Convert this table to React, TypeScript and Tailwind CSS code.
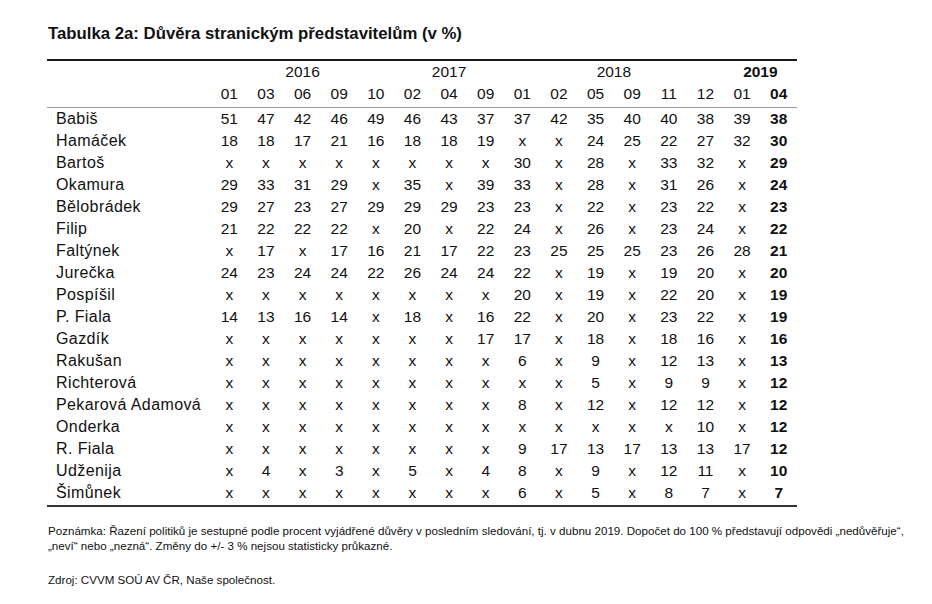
const years = [
  { label: '2016', span: 'col-span-5' },
  { label: '2017', span: 'col-span-3' },
  { label: '2018', span: 'col-span-6' },
  { label: '2019', span: 'col-span-2 font-bold' },
];

const months = ['01', '03', '06', '09', '10', '02', '04', '09', '01', '02', '05', '09', '11', '12', '01', '04'];

const rows: [string, string][] = [
  ['Babiš', '51 47 42 46 49 46 43 37 37 42 35 40 40 38 39 38'],
  ['Hamáček', '18 18 17 21 16 18 18 19 x x 24 25 22 27 32 30'],
  ['Bartoš', 'x x x x x x x x 30 x 28 x 33 32 x 29'],
  ['Okamura', '29 33 31 29 x 35 x 39 33 x 28 x 31 26 x 24'],
  ['Bělobrádek', '29 27 23 27 29 29 29 23 23 x 22 x 23 22 x 23'],
  ['Filip', '21 22 22 22 x 20 x 22 24 x 26 x 23 24 x 22'],
  ['Faltýnek', 'x 17 x 17 16 21 17 22 23 25 25 25 23 26 28 21'],
  ['Jurečka', '24 23 24 24 22 26 24 24 22 x 19 x 19 20 x 20'],
  ['Pospíšil', 'x x x x x x x x 20 x 19 x 22 20 x 19'],
  ['P. Fiala', '14 13 16 14 x 18 x 16 22 x 20 x 23 22 x 19'],
  ['Gazdík', 'x x x x x x x 17 17 x 18 x 18 16 x 16'],
  ['Rakušan', 'x x x x x x x x 6 x 9 x 12 13 x 13'],
  ['Richterová', 'x x x x x x x x x x 5 x 9 9 x 12'],
  ['Pekarová Adamová', 'x x x x x x x x 8 x 12 x 12 12 x 12'],
  ['Onderka', 'x x x x x x x x x x x x x 10 x 12'],
  ['R. Fiala', 'x x x x x x x x 9 17 13 17 13 13 17 12'],
  ['Udženija', 'x 4 x 3 x 5 x 4 8 x 9 x 12 11 x 10'],
  ['Šimůnek', 'x x x x x x x x 6 x 5 x 8 7 x 7'],
];

const grid = 'grid grid-cols-[164px_repeat(16,minmax(0,1fr))]';

export default function App() {
  return (
    <div className="w-[932px] h-[604px] bg-white text-[#111] font-['Liberation_Sans',Arial,sans-serif] px-[47px] pt-[24px]">
      <h1 className="text-[16.75px] leading-[20px] font-bold pl-px">
        Tabulka 2a: Důvěra stranickým představitelům (v %)
      </h1>

      <div className="w-[750px] mt-[15px] border-t-2 border-[#1a1a1a] text-[15.5px]">
        {/* roky */}
        <div className={`${grid} h-[21px] leading-[21px]`}>
          <div />
          {years.map((y) => (
            <div key={y.label} className={`text-center ${y.span}`}>
              {y.label}
            </div>
          ))}
        </div>

        {/* měsíce */}
        <div className={`${grid} h-[26px] leading-[24px] border-b border-[#999]`}>
          <div />
          {months.map((m, i) => (
            <div key={i} className={`text-center ${i === 15 ? 'font-bold' : ''}`}>
              {m}
            </div>
          ))}
        </div>

        <div className="pb-[1px] border-b-2 border-[#333]">
          {rows.map(([name, vals]) => (
            <div key={name} className={`${grid} h-[22px] leading-[22px]`}>
              <div className="pl-[9px] whitespace-nowrap text-[16px] tracking-[0.4px]">{name}</div>
              {vals.split(' ').map((v, i) => (
                <div key={i} className={`text-center ${i === 15 ? 'font-bold' : ''}`}>
                  {v}
                </div>
              ))}
            </div>
          ))}
        </div>
      </div>

      <div className="w-[872px] mt-[16px] text-[11.6px] leading-[15px] pl-px">
        <p>
          Poznámka: Řazení politiků je sestupné podle procent vyjádřené důvěry v posledním sledování, tj. v dubnu 2019.
          Dopočet do 100 % představují odpovědi „nedůvěřuje“, „neví“ nebo „nezná“. Změny do +/- 3 % nejsou statisticky
          průkazné.
        </p>
        <p className="mt-[19px]">Zdroj: CVVM SOÚ AV ČR, Naše společnost.</p>
      </div>
    </div>
  );
}
